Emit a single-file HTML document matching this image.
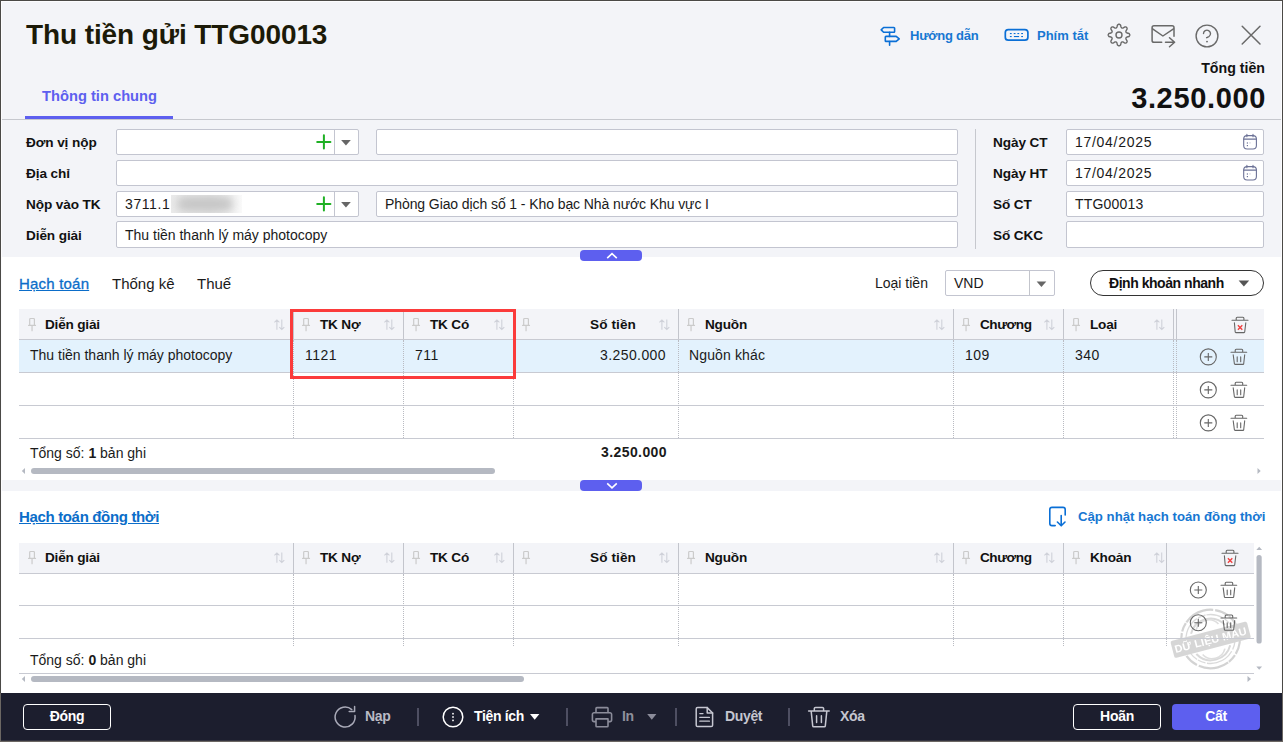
<!DOCTYPE html>
<html lang="vi">
<head>
<meta charset="utf-8">
<title>Thu tiền gửi TTG00013</title>
<style>
*{box-sizing:border-box;margin:0;padding:0}
html,body{width:1283px;height:742px;overflow:hidden;background:#fff}
body{font-family:"Liberation Sans",sans-serif;font-size:14px;color:#1a1a1a;position:relative}
.a{position:absolute;white-space:nowrap}
svg{position:absolute;overflow:visible}
#win{position:absolute;left:0;top:0;width:1283px;height:742px;overflow:hidden;background:#fff}
#topbg{position:absolute;left:0;top:0;width:1283px;height:257px;background:#f3f4f8}
h1{position:absolute;left:26px;top:19px;font-size:28px;font-weight:bold;line-height:32px;color:#1c1a08;white-space:nowrap;letter-spacing:-.1px}
.tab{position:absolute;left:42px;top:87px;font-size:14.7px;font-weight:bold;color:#5d5fef;line-height:18px;white-space:nowrap}
.tabbar{position:absolute;left:25px;top:116px;width:148px;height:3px;background:#5d5fef}
.hline{position:absolute;left:0;top:119px;width:1283px;height:1px;background:#c6c8ce}
.lbl{position:absolute;font-weight:bold;font-size:13.6px;letter-spacing:-.1px;line-height:16px;color:#111;white-space:nowrap}
.inp{position:absolute;height:26px;background:#fff;border:1px solid #c3c5d0;border-radius:2px;font-size:14px;line-height:24px;padding-left:8px;white-space:nowrap;overflow:hidden;color:#1a1a1a}
.inp.t{height:27px;line-height:27px}
.tg{position:absolute;left:580px;width:62px;height:11px;background:#5d5fef;border-radius:4px}
.lnk{color:#0b6dc9}
.hd{position:absolute;font-weight:bold;font-size:13.6px;letter-spacing:-.2px;line-height:16px;color:#111;white-space:nowrap}
.cell{position:absolute;font-size:14px;line-height:16px;white-space:nowrap;color:#1a1a1a}
.hl{position:absolute;height:1px;background:#c8cad2}
.vl{position:absolute;width:1px;background:#c3c5cc}
.vd{position:absolute;width:0;border-left:1px dotted #b9bbc2}
.thbg{position:absolute;background:#f3f4f8}
.btn{position:absolute;height:26px;border-radius:4px;font-weight:bold;font-size:14px;letter-spacing:-.3px;line-height:23px;text-align:center;color:#fff}
.ft{position:absolute;font-weight:bold;font-size:14px;letter-spacing:-.35px;line-height:16px;white-space:nowrap}
.sep{position:absolute;top:708px;width:2px;height:18px;background:#4e4f62}
</style>
</head>
<body>
<div id="win">
<div id="topbg"></div>
<h1>Thu tiền gửi TTG00013</h1>
<div class="tab">Thông tin chung</div>
<div class="tabbar"></div>
<div class="hline"></div>

<!-- header right -->
<div class="a" style="color:#1777d2;left:910px;top:28px;font-weight:bold;font-size:13px;letter-spacing:-.24px;line-height:16px">Hướng dẫn</div>
<div class="a" style="color:#1777d2;left:1037px;top:28px;font-weight:bold;font-size:13px;line-height:16px">Phím tắt</div>
<div class="a" style="right:18px;top:59px;font-weight:bold;font-size:14.2px;line-height:18px;color:#111">Tổng tiền</div>
<div class="a" style="right:17px;top:82px;font-weight:bold;font-size:29px;line-height:32px;color:#111;letter-spacing:.65px">3.250.000</div>

<!-- form left -->
<div class="lbl" style="left:26px;top:135px">Đơn vị nộp</div>
<div class="lbl" style="left:26px;top:166px">Địa chỉ</div>
<div class="lbl" style="left:26px;top:197px">Nộp vào TK</div>
<div class="lbl" style="left:26px;top:228px">Diễn giải</div>

<div class="inp" style="left:116px;top:129px;width:243px"></div>
<div class="inp" style="left:376px;top:129px;width:582px"></div>
<div class="inp" style="left:116px;top:160px;width:842px"></div>
<div class="inp" style="left:116px;top:191px;width:243px;letter-spacing:.6px">3711.1</div>
<div class="inp" style="left:376px;top:191px;width:582px;letter-spacing:-.09px">Phòng Giao dịch số 1 - Kho bạc Nhà nước Khu vực I</div>
<div class="inp t" style="left:116px;top:221px;width:842px">Thu tiền thanh lý máy photocopy</div>

<div class="vl" style="left:334px;top:130px;height:24px;background:#c3c5d0"></div><div class="vl" style="left:334px;top:192px;height:24px;background:#c3c5d0"></div>
<div class="a" style="left:171px;top:195px;width:71px;height:18px;overflow:hidden;background:linear-gradient(90deg,#ebebeb,#e3e3e3 55%,#efefef 82%,#fafafa)"><div class="a" style="left:6px;top:2px;width:56px;height:14px;border-radius:7px;background:#c6c6c6;filter:blur(4px)"></div></div>
<!-- form right -->
<div class="vl" style="left:975px;top:129px;height:120px;background:#c6c8ce"></div>
<div class="lbl" style="left:993px;top:135px">Ngày CT</div>
<div class="lbl" style="left:993px;top:166px">Ngày HT</div>
<div class="lbl" style="left:993px;top:197px">Số CT</div>
<div class="lbl" style="left:993px;top:228px">Số CKC</div>
<div class="inp" style="left:1066px;top:129px;width:198px;letter-spacing:.71px">17/04/2025</div>
<div class="inp" style="left:1066px;top:160px;width:198px;letter-spacing:.71px">17/04/2025</div>
<div class="inp" style="left:1066px;top:191px;width:198px;letter-spacing:.18px">TTG00013</div>
<div class="inp t" style="left:1066px;top:221px;width:198px"></div>

<div class="tg" style="top:250px"></div>

<!-- section 1 -->
<div class="a lnk" style="left:19px;top:275px;font-size:15px;line-height:18px;letter-spacing:.2px;-webkit-text-stroke:.3px #0b6dc9;text-decoration:underline">Hạch toán</div>
<div class="a" style="left:112px;top:275px;font-size:15px;line-height:18px">Thống kê</div>
<div class="a" style="left:197px;top:275px;font-size:15px;line-height:18px">Thuế</div>
<div class="a" style="left:875px;top:274px;font-size:14px;line-height:18px">Loại tiền</div>
<div class="inp" style="left:945px;top:270px;width:110px;height:26px">VND</div>
<div class="vl" style="left:1029px;top:271px;height:24px"></div>
<div class="a" style="left:1090px;top:270px;width:174px;height:26px;border:1px solid #333;border-radius:13px;background:#fff"></div>
<div class="a" style="left:1109px;top:275px;font-weight:bold;font-size:14px;letter-spacing:-.46px;line-height:16px;color:#111">Định khoản nhanh</div>

<!-- table 1 -->
<div class="thbg" style="left:19px;top:309px;width:1245px;height:30px"></div>
<div class="a" style="left:19px;top:340px;width:1245px;height:32px;background:#e3f2fd"></div>
<div class="hl" style="left:19px;top:339px;width:1245px"></div>
<div class="hl" style="left:19px;top:372px;width:1245px"></div>
<div class="hl" style="left:19px;top:405px;width:1245px"></div>
<div class="hl" style="left:19px;top:438px;width:1245px"></div>

<div class="vl" style="left:293px;top:309px;height:30px"></div><div class="vd" style="left:293px;top:340px;height:98px"></div>
<div class="vl" style="left:403px;top:309px;height:30px"></div><div class="vd" style="left:403px;top:340px;height:98px"></div>
<div class="vl" style="left:513px;top:309px;height:30px"></div><div class="vd" style="left:513px;top:340px;height:98px"></div>
<div class="vl" style="left:678px;top:309px;height:30px"></div><div class="vd" style="left:678px;top:340px;height:98px"></div>
<div class="vl" style="left:953px;top:309px;height:30px"></div><div class="vd" style="left:953px;top:340px;height:98px"></div>
<div class="vl" style="left:1063px;top:309px;height:30px"></div><div class="vd" style="left:1063px;top:340px;height:98px"></div>
<div class="vl" style="left:1173px;top:309px;height:30px"></div><div class="vl" style="left:1176px;top:309px;height:30px"></div><div class="vd" style="left:1173px;top:340px;height:98px"></div><div class="vd" style="left:1176px;top:340px;height:98px"></div>
<div class="hd" style="left:45px;top:317px">Diễn giải</div>
<div class="hd" style="left:320px;top:317px">TK Nợ</div>
<div class="hd" style="left:430px;top:317px">TK Có</div>
<div class="hd" style="left:590px;top:317px;letter-spacing:.1px">Số tiền</div>
<div class="hd" style="left:705px;top:317px">Nguồn</div>
<div class="hd" style="left:980px;top:317px;letter-spacing:-.45px">Chương</div>
<div class="hd" style="left:1090px;top:317px">Loại</div>

<div class="cell" style="left:30px;top:347px">Thu tiền thanh lý máy photocopy</div>
<div class="cell" style="left:305px;top:347px;letter-spacing:.5px">1121</div>
<div class="cell" style="left:415px;top:347px;letter-spacing:.5px">711</div>
<div class="cell" style="left:600px;top:347px;letter-spacing:.41px">3.250.000</div>
<div class="cell" style="left:689px;top:347px;letter-spacing:.13px">Nguồn khác</div>
<div class="cell" style="left:965px;top:347px;letter-spacing:.5px">109</div>
<div class="cell" style="left:1075px;top:347px;letter-spacing:.5px">340</div>

<div class="cell" style="left:30px;top:445px">Tổng số: <b>1</b> bản ghi</div>
<div class="cell" style="left:601px;top:444px;font-weight:bold;letter-spacing:.41px">3.250.000</div>

<!-- red highlight -->
<div class="a" style="left:290px;top:309px;width:226px;height:70px;border:3px solid #fb3b3b"></div>

<!-- strip 2 -->
<div class="a" style="left:0;top:480px;width:1283px;height:11px;background:#f3f4f8"></div>
<div class="tg" style="top:480px"></div>

<!-- section 2 -->
<div class="a lnk" style="left:19px;top:508px;font-size:15px;letter-spacing:-.34px;font-weight:bold;line-height:18px;text-decoration:underline">Hạch toán đồng thời</div>
<div class="a" style="color:#1777d2;left:1078px;top:508px;font-size:13.2px;font-weight:bold;line-height:18px">Cập nhật hạch toán đồng thời</div>

<div class="thbg" style="left:19px;top:543px;width:1235px;height:30px"></div>
<svg width="100" height="90" viewBox="1165 595 100 90" fill="none" style="left:1165px;top:595px"><g transform="rotate(-14.6 1210.5 639)" opacity=".8"><circle cx="1210.5" cy="639" r="29.3" stroke="#c9c9c9" stroke-width="2.2" stroke-dasharray="23 1.5 9 1 31 2 14 1"/><circle cx="1210.5" cy="639" r="24.5" stroke="#d2d2d2" stroke-width="1.3" stroke-dasharray="17 2 29 1.5 8 1"/><path d="M1193 629a20 20 0 0 1 35 0M1193 650a20 20 0 0 0 35 0" stroke="#d0d0d0" stroke-width="2"/><path d="M1199 626.5a13 13 0 0 1 23 0M1199 652a13 13 0 0 0 23 0" stroke="#d6d6d6" stroke-width="1.6"/><rect x="1171" y="631" width="79" height="17.5" rx="2" fill="#cdcdcd"/><text x="1210.5" y="643.8" text-anchor="middle" font-family="Liberation Sans, sans-serif" font-weight="bold" font-size="10.8" fill="#fff" letter-spacing=".2">DỮ LIỆU MẪU</text></g></svg>
<div class="hl" style="left:19px;top:573px;width:1235px"></div>
<div class="hl" style="left:19px;top:605px;width:1235px"></div>
<div class="hl" style="left:19px;top:638px;width:1235px"></div>
<div class="hl" style="left:19px;top:673px;width:1235px"></div>
<div class="vl" style="left:293px;top:543px;height:30px"></div><div class="vd" style="left:293px;top:574px;height:72px"></div>
<div class="vl" style="left:403px;top:543px;height:30px"></div><div class="vd" style="left:403px;top:574px;height:72px"></div>
<div class="vl" style="left:513px;top:543px;height:30px"></div><div class="vd" style="left:513px;top:574px;height:72px"></div>
<div class="vl" style="left:678px;top:543px;height:30px"></div><div class="vd" style="left:678px;top:574px;height:72px"></div>
<div class="vl" style="left:953px;top:543px;height:30px"></div><div class="vd" style="left:953px;top:574px;height:72px"></div>
<div class="vl" style="left:1063px;top:543px;height:30px"></div><div class="vd" style="left:1063px;top:574px;height:72px"></div>
<div class="vl" style="left:1166px;top:543px;height:30px"></div><div class="vd" style="left:1166px;top:574px;height:72px"></div>
<div class="hd" style="left:45px;top:550px">Diễn giải</div>
<div class="hd" style="left:320px;top:550px">TK Nợ</div>
<div class="hd" style="left:430px;top:550px">TK Có</div>
<div class="hd" style="left:590px;top:550px;letter-spacing:.1px">Số tiền</div>
<div class="hd" style="left:705px;top:550px">Nguồn</div>
<div class="hd" style="left:980px;top:550px;letter-spacing:-.45px">Chương</div>
<div class="hd" style="left:1090px;top:550px">Khoản</div>
<div class="cell" style="left:30px;top:652px">Tổng số: <b>0</b> bản ghi</div>

<!-- bottom bar -->
<div class="a" style="left:0;top:693px;width:1283px;height:49px;background:#1c1e2e"></div>
<div class="btn" style="left:23px;top:704px;width:88px;border:1px solid #fff">Đóng</div>
<div class="btn" style="left:1073px;top:704px;width:88px;border:1px solid #fff">Hoãn</div>
<div class="btn" style="left:1172px;top:704px;width:88px;background:#5d5fef;line-height:25px">Cất</div>
<div class="ft" style="left:365px;top:708px;color:#b9bac4">Nạp</div>
<div class="ft" style="left:474px;top:708px;color:#fff">Tiện ích</div>
<div class="ft" style="left:622px;top:708px;color:#8f909c">In</div>
<div class="ft" style="left:725px;top:708px;color:#c5c6d0">Duyệt</div>
<div class="ft" style="left:840px;top:708px;color:#c5c6d0">Xóa</div>
<div class="sep" style="left:417px"></div>
<div class="sep" style="left:566px"></div>
<div class="sep" style="left:675px"></div>
<div class="sep" style="left:788px"></div>

<svg width="1283" height="742" viewBox="0 0 1283 742" fill="none" style="left:0;top:0">
<g stroke="#0a6fd6" stroke-width="1.6" stroke-linejoin="round" stroke-linecap="round"><path d="M883.6 27.5H893.9a.7 .7 0 0 1 .7 .7V31.6a.7 .7 0 0 1-.7 .7H883.6L881.2 29.9Z"/><path d="M889.6 32.4V36.4M889.6 41.5V45.3"/><path d="M886 36.4H896.2L899.2 38.9L896.2 41.4H886a.7 .7 0 0 1-.7-.7V37.1a.7 .7 0 0 1 .7-.7Z"/></g>
<rect x="1005.3" y="29.55" width="22.6" height="10.6" rx="3" stroke="#0a6fd6" stroke-width="1.7"/>
<g fill="#0a6fd6"><rect x="1009.9" y="33" width="1.8" height="1.1"/><rect x="1013.7" y="33" width="1.8" height="1.1"/><rect x="1017.4" y="33" width="1.8" height="1.1"/><rect x="1021.2" y="33" width="1.8" height="1.1"/><rect x="1009.9" y="36" width="1.8" height="1.1"/><rect x="1021.2" y="36" width="1.8" height="1.1"/><rect x="1013.9" y="36" width="5.2" height="1.1"/></g>
<path d="M1129.8 35.0L1129.7 35.5L1129.4 36.0L1129.0 36.5L1128.0 36.8L1127.0 37.0L1126.5 37.3L1126.2 37.6L1126.0 37.9L1125.9 38.3L1125.9 38.7L1126.0 39.2L1126.6 40.1L1127.1 41.0L1127.1 41.6L1126.9 42.2L1126.6 42.6L1126.2 42.9L1125.6 43.1L1125.0 43.1L1124.1 42.6L1123.2 42.0L1122.7 41.9L1122.3 41.9L1121.9 42.0L1121.6 42.2L1121.3 42.5L1121.0 43.0L1120.8 44.0L1120.5 45.0L1120.0 45.4L1119.5 45.7L1119.0 45.8L1118.5 45.7L1118.0 45.4L1117.5 45.0L1117.2 44.0L1117.0 43.0L1116.7 42.5L1116.4 42.2L1116.1 42.0L1115.7 41.9L1115.3 41.9L1114.8 42.0L1113.9 42.6L1113.0 43.1L1112.4 43.1L1111.8 42.9L1111.4 42.6L1111.1 42.2L1110.9 41.6L1110.9 41.0L1111.4 40.1L1112.0 39.2L1112.1 38.7L1112.1 38.3L1112.0 37.9L1111.8 37.6L1111.5 37.3L1111.0 37.0L1110.0 36.8L1109.0 36.5L1108.6 36.0L1108.3 35.5L1108.2 35.0L1108.3 34.5L1108.6 34.0L1109.0 33.5L1110.0 33.2L1111.0 33.0L1111.5 32.7L1111.8 32.4L1112.0 32.1L1112.1 31.7L1112.1 31.3L1112.0 30.8L1111.4 29.9L1110.9 29.0L1110.9 28.4L1111.1 27.8L1111.4 27.4L1111.8 27.1L1112.4 26.9L1113.0 26.9L1113.9 27.4L1114.8 28.0L1115.3 28.1L1115.7 28.1L1116.1 28.0L1116.4 27.8L1116.7 27.5L1117.0 27.0L1117.2 26.0L1117.5 25.0L1118.0 24.6L1118.5 24.3L1119.0 24.2L1119.5 24.3L1120.0 24.6L1120.5 25.0L1120.8 26.0L1121.0 27.0L1121.3 27.5L1121.6 27.8L1121.9 28.0L1122.3 28.1L1122.7 28.1L1123.2 28.0L1124.1 27.4L1125.0 26.9L1125.6 26.9L1126.2 27.1L1126.6 27.4L1126.9 27.8L1127.1 28.4L1127.1 29.0L1126.6 29.9L1126.0 30.8L1125.9 31.3L1125.9 31.7L1126.0 32.1L1126.2 32.4L1126.5 32.7L1127.0 33.0L1128.0 33.2L1129.0 33.5L1129.4 34.0L1129.7 34.5Z" stroke="#696969" stroke-width="1.4" stroke-linejoin="round"/><circle cx="1119" cy="35" r="3" stroke="#696969" stroke-width="1.4"/>
<g stroke="#696969" stroke-width="1.5" stroke-linecap="round" stroke-linejoin="round"><path d="M1161.7 42.3H1154a1.9 1.9 0 0 1-1.9-1.9V27.7a1.9 1.9 0 0 1 1.9-1.9H1172.1a1.9 1.9 0 0 1 1.9 1.9V36.2"/><path d="M1152.6 28.8L1162.9 36L1173.5 28.8"/><path d="M1165.5 42.3H1174.3M1169.5 37.7L1174.6 42.3L1169.5 46.8"/></g>
<circle cx="1207" cy="36" r="10.9" stroke="#696969" stroke-width="1.4"/>
<path d="M1203.5 33.6a3.5 3.5 0 1 1 5.5 2.9c-.8 .5-1.6 .8-2.4 1.2" stroke="#696969" stroke-width="1.4" stroke-linecap="round"/><circle cx="1207" cy="41.6" r=".95" fill="#696969"/>
<path d="M1242.2 26.2L1260 44M1260 26.2L1242.2 44" stroke="#696969" stroke-width="1.5" stroke-linecap="round"/>
<path d="M317.2 141.9H330.4M323.9 135.2V148.6" stroke="#1fb024" stroke-width="2" stroke-linecap="round"/>
<path d="M341.1 140.1H350.8L345.95 145.6Z" fill="#666"/>
<path d="M317.2 203.9H330.4M323.9 197.2V210.6" stroke="#1fb024" stroke-width="2" stroke-linecap="round"/>
<path d="M341.1 202.1H350.8L345.95 207.6Z" fill="#666"/>
<g stroke="#6b7196" stroke-width="1.1"><rect x="1243.7" y="135.6" width="12.7" height="13.4" rx="3.4"/><path d="M1243.7 139.1H1256.4M1246.9 134.4V136.8M1253 134.4V136.8" stroke-linecap="round"/></g><g fill="#6b7196"><rect x="1246.8" y="142.4" width="1.2" height="1.2"/><rect x="1246.8" y="145" width="1.2" height="1.2"/><rect x="1249.4" y="142.4" width="1.2" height="1" opacity=".45"/></g>
<g stroke="#6b7196" stroke-width="1.1"><rect x="1243.7" y="166.6" width="12.7" height="13.4" rx="3.4"/><path d="M1243.7 170.1H1256.4M1246.9 165.4V167.8M1253 165.4V167.8" stroke-linecap="round"/></g><g fill="#6b7196"><rect x="1246.8" y="173.4" width="1.2" height="1.2"/><rect x="1246.8" y="176" width="1.2" height="1.2"/><rect x="1249.4" y="173.4" width="1.2" height="1" opacity=".45"/></g>
<path d="M607.2 258.2L612 253.6L616.8 258.2" stroke="#fff" stroke-width="1.6"/>
<path d="M607.2 483.3L612 487.9L616.8 483.3" stroke="#fff" stroke-width="1.6"/>
<path d="M29.7 325.4V319.3a.8 .8 0 0 1 .8-.8H33.6a.8 .8 0 0 1 .8 .8V325.4M28.6 325.4H35.5M32.05 325.4V330.7" stroke="#cbcbcb" stroke-width="1.2" stroke-linecap="round"/>
<path d="M276.9 320V329.7M274.4 322.3L276.9 319.9L279.4 322.3M281.8 319.4V329.3M279.3 327.1L281.8 329.5L284.3 327.1" stroke="#cfd1d9" stroke-width="1.1"/>
<path d="M303.7 325.4V319.3a.8 .8 0 0 1 .8-.8H307.6a.8 .8 0 0 1 .8 .8V325.4M302.6 325.4H309.5M306.05 325.4V330.7" stroke="#cbcbcb" stroke-width="1.2" stroke-linecap="round"/>
<path d="M386.9 320V329.7M384.4 322.3L386.9 319.9L389.4 322.3M391.8 319.4V329.3M389.3 327.1L391.8 329.5L394.3 327.1" stroke="#cfd1d9" stroke-width="1.1"/>
<path d="M413.7 325.4V319.3a.8 .8 0 0 1 .8-.8H417.6a.8 .8 0 0 1 .8 .8V325.4M412.6 325.4H419.5M416.05 325.4V330.7" stroke="#cbcbcb" stroke-width="1.2" stroke-linecap="round"/>
<path d="M496.9 320V329.7M494.4 322.3L496.9 319.9L499.4 322.3M501.8 319.4V329.3M499.3 327.1L501.8 329.5L504.3 327.1" stroke="#cfd1d9" stroke-width="1.1"/>
<path d="M523.7 325.4V319.3a.8 .8 0 0 1 .8-.8H527.6a.8 .8 0 0 1 .8 .8V325.4M522.6 325.4H529.5M526.05 325.4V330.7" stroke="#cbcbcb" stroke-width="1.2" stroke-linecap="round"/>
<path d="M661.9 320V329.7M659.4 322.3L661.9 319.9L664.4 322.3M666.8 319.4V329.3M664.3 327.1L666.8 329.5L669.3 327.1" stroke="#cfd1d9" stroke-width="1.1"/>
<path d="M688.7 325.4V319.3a.8 .8 0 0 1 .8-.8H692.6a.8 .8 0 0 1 .8 .8V325.4M687.6 325.4H694.5M691.05 325.4V330.7" stroke="#cbcbcb" stroke-width="1.2" stroke-linecap="round"/>
<path d="M936.9 320V329.7M934.4 322.3L936.9 319.9L939.4 322.3M941.8 319.4V329.3M939.3 327.1L941.8 329.5L944.3 327.1" stroke="#cfd1d9" stroke-width="1.1"/>
<path d="M963.7 325.4V319.3a.8 .8 0 0 1 .8-.8H967.6a.8 .8 0 0 1 .8 .8V325.4M962.6 325.4H969.5M966.05 325.4V330.7" stroke="#cbcbcb" stroke-width="1.2" stroke-linecap="round"/>
<path d="M1046.9 320V329.7M1044.4 322.3L1046.9 319.9L1049.4 322.3M1051.8 319.4V329.3M1049.3 327.1L1051.8 329.5L1054.3 327.1" stroke="#cfd1d9" stroke-width="1.1"/>
<path d="M1073.7 325.4V319.3a.8 .8 0 0 1 .8-.8H1077.6a.8 .8 0 0 1 .8 .8V325.4M1072.6 325.4H1079.5M1076.05 325.4V330.7" stroke="#cbcbcb" stroke-width="1.2" stroke-linecap="round"/>
<path d="M1156.9 320V329.7M1154.4 322.3L1156.9 319.9L1159.4 322.3M1161.8 319.4V329.3M1159.3 327.1L1161.8 329.5L1164.3 327.1" stroke="#cfd1d9" stroke-width="1.1"/>
<path d="M29.7 558.4V552.3a.8 .8 0 0 1 .8-.8H33.6a.8 .8 0 0 1 .8 .8V558.4M28.6 558.4H35.5M32.05 558.4V563.7" stroke="#cbcbcb" stroke-width="1.2" stroke-linecap="round"/>
<path d="M276.9 553V562.7M274.4 555.3L276.9 552.9L279.4 555.3M281.8 552.4V562.3M279.3 560.1L281.8 562.5L284.3 560.1" stroke="#cfd1d9" stroke-width="1.1"/>
<path d="M303.7 558.4V552.3a.8 .8 0 0 1 .8-.8H307.6a.8 .8 0 0 1 .8 .8V558.4M302.6 558.4H309.5M306.05 558.4V563.7" stroke="#cbcbcb" stroke-width="1.2" stroke-linecap="round"/>
<path d="M386.9 553V562.7M384.4 555.3L386.9 552.9L389.4 555.3M391.8 552.4V562.3M389.3 560.1L391.8 562.5L394.3 560.1" stroke="#cfd1d9" stroke-width="1.1"/>
<path d="M413.7 558.4V552.3a.8 .8 0 0 1 .8-.8H417.6a.8 .8 0 0 1 .8 .8V558.4M412.6 558.4H419.5M416.05 558.4V563.7" stroke="#cbcbcb" stroke-width="1.2" stroke-linecap="round"/>
<path d="M496.9 553V562.7M494.4 555.3L496.9 552.9L499.4 555.3M501.8 552.4V562.3M499.3 560.1L501.8 562.5L504.3 560.1" stroke="#cfd1d9" stroke-width="1.1"/>
<path d="M523.7 558.4V552.3a.8 .8 0 0 1 .8-.8H527.6a.8 .8 0 0 1 .8 .8V558.4M522.6 558.4H529.5M526.05 558.4V563.7" stroke="#cbcbcb" stroke-width="1.2" stroke-linecap="round"/>
<path d="M661.9 553V562.7M659.4 555.3L661.9 552.9L664.4 555.3M666.8 552.4V562.3M664.3 560.1L666.8 562.5L669.3 560.1" stroke="#cfd1d9" stroke-width="1.1"/>
<path d="M688.7 558.4V552.3a.8 .8 0 0 1 .8-.8H692.6a.8 .8 0 0 1 .8 .8V558.4M687.6 558.4H694.5M691.05 558.4V563.7" stroke="#cbcbcb" stroke-width="1.2" stroke-linecap="round"/>
<path d="M936.9 553V562.7M934.4 555.3L936.9 552.9L939.4 555.3M941.8 552.4V562.3M939.3 560.1L941.8 562.5L944.3 560.1" stroke="#cfd1d9" stroke-width="1.1"/>
<path d="M963.7 558.4V552.3a.8 .8 0 0 1 .8-.8H967.6a.8 .8 0 0 1 .8 .8V558.4M962.6 558.4H969.5M966.05 558.4V563.7" stroke="#cbcbcb" stroke-width="1.2" stroke-linecap="round"/>
<path d="M1046.9 553V562.7M1044.4 555.3L1046.9 552.9L1049.4 555.3M1051.8 552.4V562.3M1049.3 560.1L1051.8 562.5L1054.3 560.1" stroke="#cfd1d9" stroke-width="1.1"/>
<path d="M1073.7 558.4V552.3a.8 .8 0 0 1 .8-.8H1077.6a.8 .8 0 0 1 .8 .8V558.4M1072.6 558.4H1079.5M1076.05 558.4V563.7" stroke="#cbcbcb" stroke-width="1.2" stroke-linecap="round"/>
<path d="M1156.8 553V562.7M1154.3 555.3L1156.8 552.9L1159.3 555.3M1161.7 552.4V562.3M1159.2 560.1L1161.7 562.5L1164.2 560.1" stroke="#cfd1d9" stroke-width="1.1"/>
<path d="M1232 320.3H1248M1236.2 320.3V318.3a1 1 0 0 1 1-1H1242.9a1 1 0 0 1 1 1V320.3M1234.4 322.8L1235.2 332a.7 .7 0 0 0 .7 .6H1244a.7 .7 0 0 0 .7-.6L1245.8 322.8" stroke="#666" stroke-width="1.1" stroke-linecap="round"/><path d="M1237.9 325.3L1242.3 329.7M1242.3 325.3L1237.9 329.7" stroke="#f03e3e" stroke-width="1.4"/>
<circle cx="1208.3" cy="356.9" r="8" stroke="#666" stroke-width="1.1"/><path d="M1204.3 356.9H1212.3M1208.3 352.9V360.9" stroke="#666" stroke-width="1.1"/>
<path d="M1231 352.2H1246.7M1235.2 352.2V350.2a1 1 0 0 1 1-1H1241.7a1 1 0 0 1 1 1V352.2M1233.2 354.8L1234.4 363.8a.7 .7 0 0 0 .7 .6H1243a.7 .7 0 0 0 .7-.6L1244.7 354.8M1237.2 356.9V361.7M1240.7 356.9V361.7" stroke="#666" stroke-width="1.1" stroke-linecap="round"/>
<circle cx="1208.3" cy="389.9" r="8" stroke="#666" stroke-width="1.1"/><path d="M1204.3 389.9H1212.3M1208.3 385.9V393.9" stroke="#666" stroke-width="1.1"/>
<path d="M1231 385.2H1246.7M1235.2 385.2V383.2a1 1 0 0 1 1-1H1241.7a1 1 0 0 1 1 1V385.2M1233.2 387.8L1234.4 396.8a.7 .7 0 0 0 .7 .6H1243a.7 .7 0 0 0 .7-.6L1244.7 387.8M1237.2 389.9V394.7M1240.7 389.9V394.7" stroke="#666" stroke-width="1.1" stroke-linecap="round"/>
<circle cx="1208.3" cy="422.9" r="8" stroke="#666" stroke-width="1.1"/><path d="M1204.3 422.9H1212.3M1208.3 418.9V426.9" stroke="#666" stroke-width="1.1"/>
<path d="M1231 418.2H1246.7M1235.2 418.2V416.2a1 1 0 0 1 1-1H1241.7a1 1 0 0 1 1 1V418.2M1233.2 420.8L1234.4 429.8a.7 .7 0 0 0 .7 .6H1243a.7 .7 0 0 0 .7-.6L1244.7 420.8M1237.2 422.9V427.7M1240.7 422.9V427.7" stroke="#666" stroke-width="1.1" stroke-linecap="round"/>
<path d="M1222 553.3H1238M1226.2 553.3V551.3a1 1 0 0 1 1-1H1232.9a1 1 0 0 1 1 1V553.3M1224.4 555.8L1225.2 565a.7 .7 0 0 0 .7 .6H1234a.7 .7 0 0 0 .7-.6L1235.8 555.8" stroke="#666" stroke-width="1.1" stroke-linecap="round"/><path d="M1227.9 558.3L1232.3 562.7M1232.3 558.3L1227.9 562.7" stroke="#f03e3e" stroke-width="1.4"/>
<circle cx="1198.3" cy="590" r="8" stroke="#666" stroke-width="1.1"/><path d="M1194.3 590H1202.3M1198.3 586V594" stroke="#666" stroke-width="1.1"/>
<path d="M1221 585.3H1236.7M1225.2 585.3V583.3a1 1 0 0 1 1-1H1231.7a1 1 0 0 1 1 1V585.3M1223.2 587.9L1224.4 596.9a.7 .7 0 0 0 .7 .6H1233a.7 .7 0 0 0 .7-.6L1234.7 587.9M1227.2 590V594.8M1230.7 590V594.8" stroke="#666" stroke-width="1.1" stroke-linecap="round"/>
<circle cx="1198.3" cy="622.7" r="8" stroke="#666" stroke-width="1.1"/><path d="M1194.3 622.7H1202.3M1198.3 618.7V626.7" stroke="#666" stroke-width="1.1"/>
<path d="M1221 618H1236.7M1225.2 618V616a1 1 0 0 1 1-1H1231.7a1 1 0 0 1 1 1V618M1223.2 620.6L1224.4 629.6a.7 .7 0 0 0 .7 .6H1233a.7 .7 0 0 0 .7-.6L1234.7 620.6M1227.2 622.7V627.5M1230.7 622.7V627.5" stroke="#666" stroke-width="1.1" stroke-linecap="round"/>
<path d="M1036.6 281.4H1046.3L1041.45 286.9Z" fill="#666"/>
<path d="M1238.6 280.4H1249.2L1243.9 286.4Z" fill="#555"/>
<path d="M1065.2 515V509.6a2.2 2.2 0 0 0-2.2-2.2H1052a2.2 2.2 0 0 0-2.2 2.2V523.4a2.2 2.2 0 0 0 2.2 2.2H1055.2" stroke="#0a6fd6" stroke-width="1.6" stroke-linecap="round"/><path d="M1061.2 515.5V525.5M1057.4 522L1061.2 525.8L1065 522" stroke="#0a6fd6" stroke-width="1.6" stroke-linecap="round" stroke-linejoin="round"/>
<rect x="31" y="468" width="464" height="6" rx="3" fill="#b5b9c2"/><path d="M25 468V474L21.8 471Z" fill="#b5b9c2"/><path d="M1257.5 468V474L1260.7 471Z" fill="#b5b9c2"/>
<rect x="31" y="676" width="493" height="6" rx="3" fill="#b5b9c2"/><path d="M25 676V682L21.8 679Z" fill="#b5b9c2"/><path d="M1247.5 676V682L1251 679Z" fill="#b5b9c2"/>
<rect x="1256.5" y="555" width="5.2" height="88.5" rx="2.6" fill="#b5b9c2"/><path d="M1256.3 550H1262.1L1259.2 546.7Z" fill="#b5b9c2"/><path d="M1256.3 666.5H1262.1L1259.2 669.8Z" fill="#b5b9c2"/>
<path d="M351.79 709.57A10 10 0 1 0 355 715.61" stroke="#a9aab8" stroke-width="1.5" stroke-linecap="round"/><path d="M354.6 706.6V711.4H349.2" stroke="#a9aab8" stroke-width="1.5" stroke-linecap="round" stroke-linejoin="round"/>
<circle cx="453" cy="717" r="9.8" stroke="#fff" stroke-width="1.5"/><g fill="#fff"><rect x="452.2" y="712.9" width="1.6" height="1.6"/><rect x="452.2" y="716.2" width="1.6" height="1.6"/><rect x="452.2" y="719.6" width="1.6" height="1.6"/></g>
<path d="M530 714H539.4L534.7 719.8Z" fill="#fff"/>
<g stroke="#8b8c9a" stroke-width="1.6" stroke-linejoin="round"><path d="M596 712.8V708.4a.8 .8 0 0 1 .8-.8H607.2a.8 .8 0 0 1 .8 .8V712.8"/><path d="M596 721.6H594a1.6 1.6 0 0 1-1.6-1.6V714.4a1.6 1.6 0 0 1 1.6-1.6H610a1.6 1.6 0 0 1 1.6 1.6V720a1.6 1.6 0 0 1-1.6 1.6H608"/><path d="M596 718.9H608V725.9a.8 .8 0 0 1-.8 .8H596.8a.8 .8 0 0 1-.8-.8Z"/></g>
<path d="M647.2 714.1H656.4L651.8 719.8Z" fill="#8b8c9a"/>
<g stroke="#c6c7d1" stroke-width="1.5" stroke-linejoin="round" stroke-linecap="round"><path d="M707.2 707.6H697.6a1.4 1.4 0 0 0-1.4 1.4V725.2a1.4 1.4 0 0 0 1.4 1.4H711.2a1.4 1.4 0 0 0 1.4-1.4V713Z"/><path d="M707.2 707.6V713H712.6"/><path d="M699.8 713.6H703M699.8 717.4H709.4M699.8 721.2H709.4" stroke-width="1.3"/></g>
<path d="M808.6 711H829.2M814.3 711V708.6a1.2 1.2 0 0 1 1.2-1.2H822.4a1.2 1.2 0 0 1 1.2 1.2V711M811.2 711.4L812.7 725.9a1 1 0 0 0 1 .9H824.3a1 1 0 0 0 1-.9L826.8 711.4M816.6 715.8V722.4M821.4 715.8V722.4" stroke="#c6c7d1" stroke-width="1.5" stroke-linecap="round"/>
</svg>
<!-- window borders -->
<div class="a" style="left:1px;top:1px;width:1px;height:692px;background:#fcfcfe"></div>
<div class="a" style="left:1281px;top:1px;width:1px;height:692px;background:#fcfcfe"></div>
<div class="a" style="left:1px;top:1px;width:1281px;height:1px;background:#fcfcfe"></div>
<div class="a" style="left:0;top:0;width:1px;height:693px;background:#4b4946"></div>
<div class="a" style="left:1282px;top:0;width:1px;height:693px;background:#4b4946"></div>
<div class="a" style="left:0;top:693px;width:1px;height:49px;background:#6b6763"></div>
<div class="a" style="left:1282px;top:693px;width:1px;height:49px;background:#6b6763"></div>
<div class="a" style="left:0;top:0;width:1283px;height:1px;background:#4b4946"></div>
<div class="a" style="left:0;top:741px;width:1283px;height:1px;background:#6b6763"></div>
<div class="a" style="left:1px;top:740px;width:1281px;height:1px;background:#34343f"></div>

</div>
</body>
</html>
